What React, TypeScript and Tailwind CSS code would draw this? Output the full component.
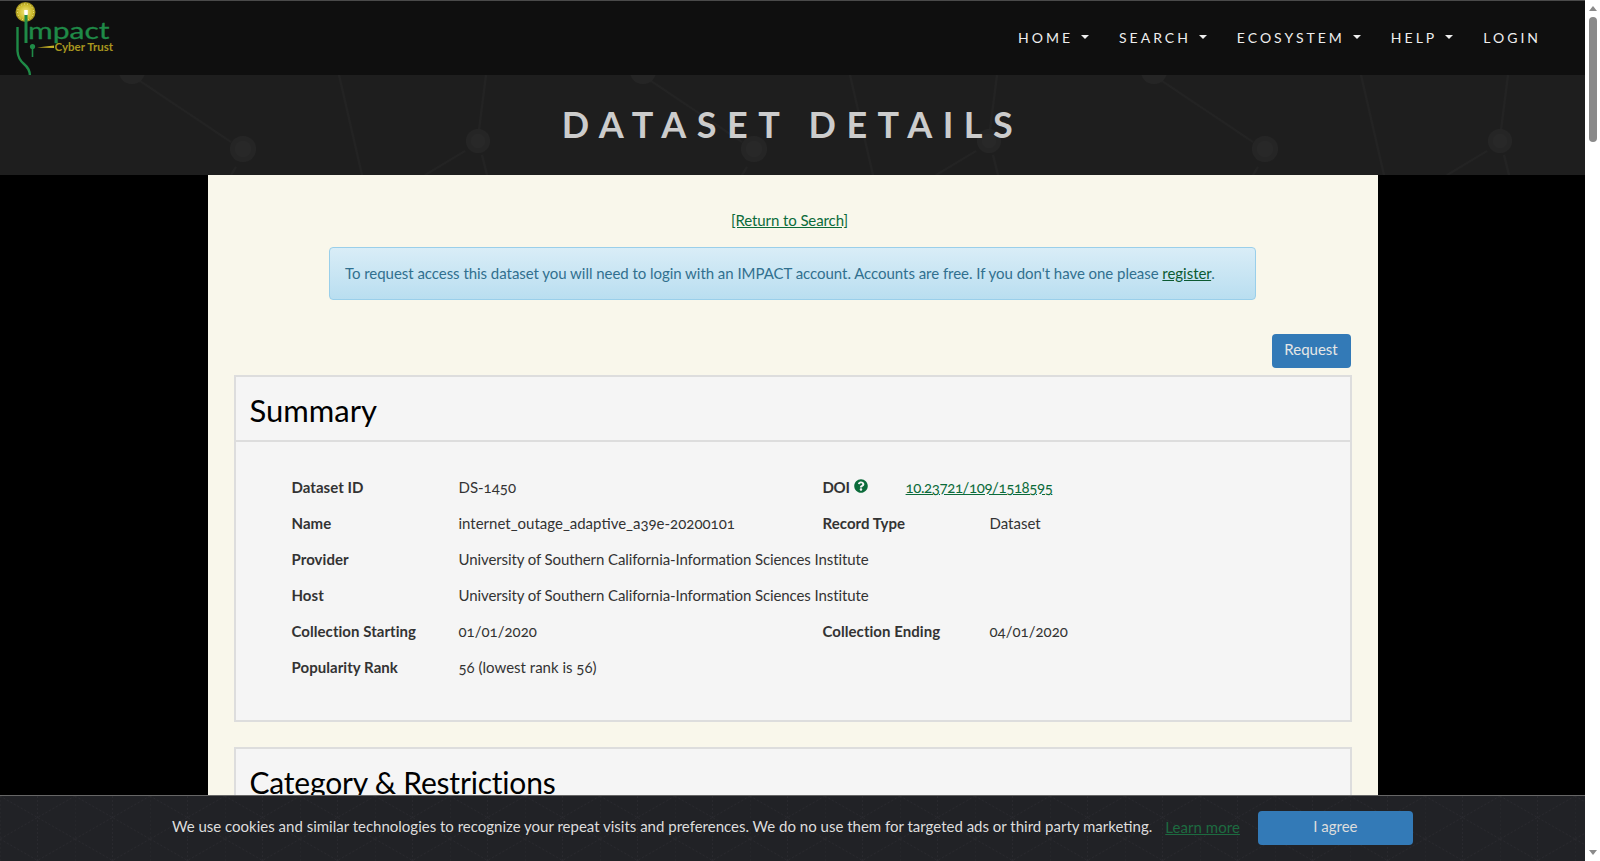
import type { ReactNode } from "react";
import { FaQuestionCircle } from "react-icons/fa";

const navItems = [
  { label: "HOME", caret: true },
  { label: "SEARCH", caret: true },
  { label: "ECOSYSTEM", caret: true },
  { label: "HELP", caret: true },
  { label: "LOGIN", caret: false },
];

function Logo() {
  return (
    <svg width="130" height="75" viewBox="0 0 130 75" className="shrink-0 tracking-normal">
      <defs>
        <radialGradient id="bulb">
          <stop offset="0%" stopColor="#f2e77e" />
          <stop offset="70%" stopColor="#cdbb2c" />
          <stop offset="100%" stopColor="#9f8f1c" />
        </radialGradient>
      </defs>
      <circle cx="25.5" cy="11" r="10" fill="url(#bulb)" />
      <circle cx="25.5" cy="11" r="8" fill="none" stroke="#f5ee9a" strokeWidth="1" strokeDasharray="1 2" />
      <path d="M26 13V42" stroke="#1f8a47" strokeWidth="3" fill="none" />
      <path d="M26 9V14" stroke="#ffffff" strokeWidth="3.5" fill="none" />
      <path d="M17.5 26V50Q18 58 24 63Q30 68 30 75" stroke="#1f8a47" strokeWidth="2.4" fill="none" />
      <circle cx="32.5" cy="45.5" r="2.6" fill="#1f8a47" />
      <path d="M32.5 46V56" stroke="#1f8a47" strokeWidth="1.6" />
      <path d="M37 46.5L54 44.5V47Z" fill="#c9b326" />
      <text
        transform="translate(28 38) scale(1.25 1)"
        fontFamily="Lato, sans-serif"
        fontSize="24"
        fill="#1f8a47"
        stroke="#1f8a47"
        strokeWidth="0.3"
      >
        mpact
      </text>
      <text x="54.5" y="50" fontFamily="Lato, sans-serif" fontSize="11.5" fontWeight="700" fill="#a8961f">
        Cyber Trust
      </text>
    </svg>
  );
}

function HeroPattern() {
  return (
    <svg className="absolute inset-0 h-full w-full" aria-hidden="true">
      <defs>
        <pattern id="net" x="0" y="0" width="511" height="100" patternUnits="userSpaceOnUse">
          <g fill="none" stroke="#232323" strokeWidth="2">
            <path d="M140 6L231 67" />
            <path d="M339 0L362 100" />
            <path d="M486 0L479 55" />
            <path d="M465 76L425 100" />
            <path d="M482 80L487 100" />
            <path d="M236 92L231 100" />
          </g>
          <circle cx="132" cy="-4" r="13" fill="#252525" />
          <circle cx="243" cy="74" r="13" fill="#252525" />
          <circle cx="243" cy="74" r="8" fill="#282828" />
          <circle cx="478" cy="66" r="12" fill="#252525" />
          <circle cx="478" cy="66" r="7" fill="#282828" />
        </pattern>
      </defs>
      <rect width="100%" height="100%" fill="url(#net)" />
    </svg>
  );
}

function CookiePattern() {
  return (
    <svg className="absolute inset-0 h-full w-full" aria-hidden="true">
      <defs>
        <pattern id="hex" x="0" y="0" width="75" height="43" patternUnits="userSpaceOnUse">
          <path d="M0 0L75 43M75 0L0 43M0 0V43M37.5 0V43" stroke="#29292e" strokeWidth="1" strokeDasharray="2 2" fill="none" />
        </pattern>
      </defs>
      <rect width="100%" height="100%" fill="url(#hex)" />
    </svg>
  );
}

function Row({
  label,
  value,
  label2,
  value2,
  tight,
  children,
}: {
  label: string;
  value: string;
  label2?: string;
  value2?: string;
  tight?: boolean;
  children?: ReactNode;
}) {
  return (
    <div className="flex h-9 items-center text-[#333]">
      <div className="w-[167px] shrink-0 font-bold tracking-[0.05px]">{label}</div>
      <div className={tight ? "w-[364px] shrink-0 whitespace-nowrap tracking-[-0.1px]" : "w-[364px] shrink-0 whitespace-nowrap"}>
        {value}
      </div>
      {label2 && <div className="w-[167px] shrink-0 font-bold tracking-[0.05px]">{label2}</div>}
      {value2 && <div className="whitespace-nowrap">{value2}</div>}
      {children}
    </div>
  );
}

export default function App() {
  return (
    <div className="flex h-[861px] w-full overflow-hidden bg-white font-['Lato','Liberation_Sans',sans-serif] text-[15px] [font-variant-numeric:oldstyle-nums]">
      <div className="relative min-w-0 flex-1 overflow-hidden bg-black">
        <header className="flex h-[75px] items-center justify-between border-t border-[#4a4a4a] bg-[#0f0f0f] pr-[44px] text-[14px] tracking-[3px] text-[#eee]">
          <Logo />
          <nav className="flex items-center gap-[30px] pb-[2px]">
            {navItems.map((item) => (
              <a key={item.label} className="flex items-center gap-[8px]">
                {item.label}
                {item.caret && (
                  <span className="h-0 w-0 border-x-4 border-t-4 border-x-transparent border-t-[#eee]" />
                )}
              </a>
            ))}
          </nav>
        </header>

        <section className="relative flex h-[100px] items-center justify-center overflow-hidden bg-[#1e1e1e]">
          <HeroPattern />
          <h1 className="relative mb-[2px] text-[36px] font-bold tracking-[10.5px] text-[#cccccc]">DATASET DETAILS</h1>
        </section>

        <main className="mx-auto h-[700px] w-[1170px] bg-[#f9f7eb] px-[26px] pt-[35px]">
          <div className="pr-[6px] text-center leading-[20px] tracking-[-0.1px]">
            <a className="text-[#0b6b3a] underline">[Return to Search]</a>
          </div>
          <div className="mx-auto mt-[17px] flex h-[53px] w-[927px] items-center rounded-[4px] border border-[#9acfea] bg-gradient-to-b from-[#d9edf7] to-[#b9def0] px-[15px] pb-[1px] tracking-[-0.04px] text-[#31708f]">
            <span>
              To request access this dataset you will need to login with an IMPACT account. Accounts are free. If you don't have one please{" "}
              <a className="text-[#0b5a32] underline">register</a>.
            </span>
          </div>
          <div className="mt-[34px] flex justify-end pr-[1px]">
            <button className="h-[34px] w-[79px] rounded-[4px] bg-[#337ab7] pb-[3px] text-[15px] text-[#e6e6e6]">Request</button>
          </div>

          <section className="mt-[7px] h-[347px] border-2 border-[#ddd] bg-[#f5f5f5]">
            <div className="flex h-[65px] items-center border-b-2 border-[#ddd] px-[14px] pt-[4px] text-[31px] text-black">Summary</div>
            <div className="px-[56px] pt-[27px]">
              <Row label="Dataset ID" value="DS-1450">
                <span className="font-bold tracking-[-0.3px]">DOI</span>
                <FaQuestionCircle className="mb-[3px] ml-[4px] text-[14px] text-[#0b6b3a]" />
                <a className="ml-[38px] tracking-[-0.4px] text-[#0b6b3a] underline">10.23721/109/1518595</a>
              </Row>
              <Row label="Name" value="internet_outage_adaptive_a39e-20200101" label2="Record Type" value2="Dataset" />
              <Row tight label="Provider" value="University of Southern California-Information Sciences Institute" />
              <Row tight label="Host" value="University of Southern California-Information Sciences Institute" />
              <Row label="Collection Starting" value="01/01/2020" label2="Collection Ending" value2="04/01/2020" />
              <Row label="Popularity Rank" value="56 (lowest rank is 56)" />
            </div>
          </section>

          <section className="mt-[25px] h-[200px] border-2 border-[#ddd] bg-[#f5f5f5]">
            <div className="flex h-[65px] items-center px-[14px] pt-[2px] text-[30px] tracking-[-0.2px] text-black">Category &amp; Restrictions</div>
          </section>
        </main>

        <div className="absolute inset-x-0 bottom-0 flex h-[66px] items-center overflow-hidden border-t border-[#666] bg-[#212226] pb-[2px] pl-[172px]">
          <CookiePattern />
          <span className="relative mb-[2px] whitespace-nowrap text-[#ddd]">
            We use cookies and similar technologies to recognize your repeat visits and preferences. We do no use them for targeted ads or third party marketing.
          </span>
          <a className="relative ml-[13px] tracking-[0.05px] text-[#1d6b40] underline">Learn more</a>
          <button className="relative ml-[18px] h-[34px] w-[155px] rounded-[4px] bg-[#337ab7] pb-[3px] text-[15px] text-[#ddd]">I agree</button>
        </div>
      </div>

      <aside className="relative flex w-[15px] shrink-0 flex-col items-center bg-white">
        <span className="mt-[6px] h-0 w-0 border-x-[4px] border-b-[5px] border-x-transparent border-b-[#8a8a8a]" />
        <span className="mt-[6px] h-[125px] w-[8px] rounded-full bg-[#8a8a8a]" />
        <span className="mt-auto mb-[6px] h-0 w-0 border-x-[4px] border-t-[5px] border-x-transparent border-t-[#8a8a8a]" />
      </aside>
    </div>
  );
}
